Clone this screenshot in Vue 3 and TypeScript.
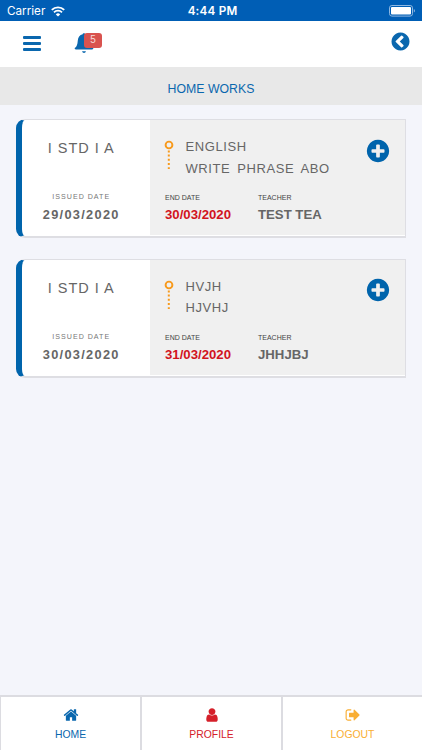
<script setup lang="ts">
interface HomeWork {
  group: string
  issued: string
  subject: string
  title: string
  due: string
  teacher: string
}

interface Tab {
  label: string
  tone: string
  path: string
}

const works: HomeWork[] = [
  { group: 'I STD I A', issued: '29/03/2020', subject: 'ENGLISH', title: 'WRITE PHRASE ABO', due: '30/03/2020', teacher: 'TEST TEA' },
  { group: 'I STD I A', issued: '30/03/2020', subject: 'HVJH', title: 'HJVHJ', due: '31/03/2020', teacher: 'JHHJBJ' },
]

const disc = 'M1664 896q0 209-103 385.5t-279.5 279.5-385.5 103-385.5-103-279.5-279.5-103-385.5 103-385.5 279.5-279.5 385.5-103 385.5 103 279.5 279.5 103 385.5z'
const plusPath = 'M1344 960v-128q0-26-19-45t-45-19h-256v-256q0-26-19-45t-45-19h-128q-26 0-45 19t-19 45v256h-256q-26 0-45 19t-19 45v128q0 26 19 45t45 19h256v256q0 26 19 45t45 19h128q26 0 45-19t19-45v-256h256q26 0 45-19t19-45z' + disc
const backPath = 'M1037 1395l102-102q19-19 19-45t-19-45l-307-307 307-307q19-19 19-45t-19-45l-102-102q-19-19-45-19t-45 19l-454 454q-19 19-19 45t19 45l454 454q19 19 45 19t45-19z' + disc

const tabs: Tab[] = [
  {
    label: 'HOME',
    tone: 'blue',
    path: 'M1472 992v480q0 26-19 45t-45 19h-384v-384h-256v384h-384q-26 0-45-19t-19-45v-480q0-1 .5-3t.5-3l575-474 575 474q1 2 1 6zm223-69l-62 74q-8 9-21 11h-3q-13 0-21-7l-692-577-692 577q-12 8-24 7-13-2-21-11l-62-74q-8-10-7-23.5t11-21.5l719-599q32-26 76-26t76 26l244 204v-195q0-14 9-23t23-9h192q14 0 23 9t9 23v408l219 182q10 8 11 21.5t-7 23.5z',
  },
  {
    label: 'PROFILE',
    tone: 'red',
    path: 'M1536 1399q0 109-62.5 187t-150.5 78h-854q-88 0-150.5-78t-62.5-187q0-85 8.5-160.5t31.5-152 58.5-131 94-89 134.5-34.5q131 128 313 128t313-128q76 0 134.5 34.5t94 89 58.5 131 31.5 152 8.5 160.5zm-256-887q0 159-112.5 271.5t-271.5 112.5-271.5-112.5-112.5-271.5 112.5-271.5 271.5-112.5 271.5 112.5 112.5 271.5z',
  },
  {
    label: 'LOGOUT',
    tone: 'amber',
    path: 'M704 1440q0 4 1 20t.5 26.5-3 23.5-10 19.5-20.5 6.5h-320q-119 0-203.5-84.5t-84.5-203.5v-704q0-119 84.5-203.5t203.5-84.5h320q13 0 22.5 9.5t9.5 22.5q0 4 1 20t.5 26.5-3 23.5-10 19.5-20.5 6.5h-320q-66 0-113 47t-47 113v704q0 66 47 113t113 47h312l11.5 1 11.5 3 8 5.5 7 9 2 13.5zm928-544q0 26-19 45l-544 544q-19 19-45 19t-45-19-19-45v-288h-448q-26 0-45-19t-19-45v-384q0-26 19-45t45-19h448v-288q0-26 19-45t45-19 45 19l544 544q19 19 19 45z',
  },
]
</script>

<template>
  <div class="screen">
    <div class="status">
      <div class="carrier">
        <span>Carrier</span>
        <svg class="wifi" viewBox="0 0 14 11" fill="none" stroke="#fff">
          <path d="M.8 3.9a8.8 8.8 0 0 1 12.4 0" stroke-width="1.9" />
          <path d="M3 6.3a5.6 5.6 0 0 1 8 0" stroke-width="1.8" />
          <path d="M7 10.6 4.8 8.4a3.1 3.1 0 0 1 4.4 0z" fill="#fff" stroke="none" />
        </svg>
      </div>
      <span class="clock">4:44 PM</span>
      <div class="power">
        <svg class="battery" viewBox="0 0 27 12">
          <rect x=".5" y=".5" width="23" height="10.6" rx="2.4" fill="none" stroke="#8fb8e2" />
          <rect x="2" y="2" width="20" height="7.6" rx="1" fill="#fff" />
          <path d="M24.8 4v3.6q1.2-.5 1.2-1.8t-1.2-1.8z" fill="#8fb8e2" />
        </svg>
      </div>
    </div>

    <header class="topbar">
      <div class="menu"><i></i><i></i><i></i></div>
      <div class="alerts">
        <svg class="bell" viewBox="0 0 20 22" fill="#0a67ae">
          <path d="M10 1.2q1.3 0 1.3 1.1c3.2.7 4.6 3 4.9 6.1.3 4.1 1 6.2 3.1 7.7q.3 1.4-1.2 1.4H1.9Q.3 17.5.7 16.1C2.8 14.6 3.5 12.500 3.8 8.4 4.1 5.3 5.5 3 8.7 2.3 8.7 1.500 9.3 1.2 10 1.2z" />
          <path d="M8 19.200h4q-.5 1.800-2 1.800t-2-1.800z" />
        </svg>
        <span class="badge">5</span>
      </div>
      <svg class="back" viewBox="0 0 1792 1792"><path :d="backPath" /></svg>
    </header>

    <h1 class="title">HOME WORKS</h1>

    <main class="list">
      <article v-for="work in works" :key="work.due" class="card">
        <div class="issued">
          <div class="group">{{ work.group }}</div>
          <div class="issued-label">ISSUED DATE</div>
          <div class="issued-date">{{ work.issued }}</div>
        </div>
        <div class="detail">
          <div class="upper">
            <svg class="marker" viewBox="0 0 10 30" fill="none" stroke="#f79a1d">
              <circle cx="5" cy="5" r="3.4" stroke-width="1.9" />
              <path d="M4.8 10.4V29" stroke-width="2" stroke-dasharray="2 2.2" />
            </svg>
            <div class="lines">
              <div>{{ work.subject }}</div>
              <div>{{ work.title }}</div>
            </div>
            <svg class="plus" viewBox="0 0 1792 1792"><path :d="plusPath" /></svg>
          </div>
          <div class="lower">
            <div class="due">
              <div class="caption">END DATE</div>
              <div class="value late">{{ work.due }}</div>
            </div>
            <div>
              <div class="caption">TEACHER</div>
              <div class="value">{{ work.teacher }}</div>
            </div>
          </div>
        </div>
      </article>
    </main>

    <nav class="tabs">
      <div v-for="tab in tabs" :key="tab.label" class="tab" :class="tab.tone">
        <svg class="tab-icon" viewBox="0 0 1792 1792"><path :d="tab.path" /></svg>
        <span>{{ tab.label }}</span>
      </div>
    </nav>
  </div>
</template>

<style>
body {
  margin: 0;
  background: #f4f5fb;
}
</style>

<style scoped>
.screen {
  width: 422px;
  height: 750px;
  display: flex;
  flex-direction: column;
  overflow: hidden;
  background: #f4f5fb;
  font-family: "Liberation Sans", Arial, sans-serif;
  color: #666;
}
svg {
  display: block;
  flex: none;
}
.status {
  height: 21px;
  flex: none;
  box-sizing: border-box;
  padding: 0 6px 0 7px;
  display: grid;
  grid-template-columns: 1fr auto 1fr;
  align-items: center;
  background: #005eb5;
  color: #fff;
  font-family: Inter, sans-serif;
  font-size: 11.7px;
  line-height: 22px;
}
.carrier {
  display: flex;
  align-items: center;
  gap: 6px;
}
.wifi {
  width: 14px;
  height: 11px;
}
.clock {
  margin-left: 2px;
  font-weight: 600;
  letter-spacing: 0.2px;
}
.power {
  display: flex;
  justify-content: flex-end;
}
.battery {
  width: 27px;
  height: 12px;
}
.topbar {
  height: 46px;
  flex: none;
  box-sizing: border-box;
  padding: 0 11px 0 23px;
  display: flex;
  align-items: flex-start;
  background: #fff;
}
.menu {
  width: 18px;
  padding-top: 15px;
  display: flex;
  flex-direction: column;
  gap: 3px;
}
.menu i {
  height: 3px;
  border-radius: 1px;
  background: #0a67ae;
}
.alerts {
  position: relative;
  margin: 11px 0 0 33px;
}
.bell {
  width: 20px;
  height: 22px;
}
.badge {
  position: absolute;
  left: 10px;
  top: 1px;
  width: 18px;
  height: 15px;
  border-radius: 3px;
  background: #d9534f;
  color: #f6dcdb;
  font-size: 10px;
  line-height: 14px;
  text-align: center;
}
.back {
  width: 21px;
  height: 21px;
  margin: 10px 0 0 auto;
  fill: #0a67ae;
}
.title {
  height: 38px;
  flex: none;
  margin: 0;
  background: #e8e8e8;
  color: #0a67ae;
  font-size: 12.3px;
  font-weight: 400;
  line-height: 44px;
  text-align: center;
}
.list {
  flex: 1;
  padding: 14px 16px 0;
  display: flex;
  flex-direction: column;
  gap: 20.5px;
}
.card {
  height: 119px;
  box-sizing: border-box;
  display: flex;
  border: 1px solid #dedee3;
  border-bottom-width: 2px;
  border-left: 6px solid #0064ac;
  border-radius: 9px 0 0 9px;
  background: #fff;
}
.issued {
  width: 128px;
  flex: none;
  box-sizing: border-box;
  padding: 19px 9.5px 0 0;
  text-align: center;
  white-space: nowrap;
}
.group {
  font-size: 14.5px;
  line-height: 18px;
  letter-spacing: 1px;
}
.issued-label {
  margin-top: 36px;
  font-size: 7.1px;
  line-height: 9px;
  letter-spacing: 1px;
  color: #777;
}
.issued-date {
  margin-top: 5px;
  font-size: 12.8px;
  line-height: 16px;
  font-weight: 700;
  letter-spacing: 1.3px;
}
.detail {
  flex: 1;
  margin-bottom: 1px;
  box-sizing: border-box;
  padding: 15px 15px 0 14px;
  background: #f0f0f0;
}
.upper {
  display: flex;
  align-items: flex-start;
}
.marker {
  width: 10px;
  height: 30px;
  margin-top: 5px;
}
.lines {
  flex: 1;
  height: 49px;
  margin-left: 11.5px;
  padding-top: 1px;
  font-size: 13px;
  line-height: 21.5px;
  letter-spacing: 0.6px;
  word-spacing: 2.7px;
  white-space: nowrap;
}
.plus {
  width: 26px;
  height: 26px;
  margin-top: 2.5px;
  margin-right: -1px;
  fill: #0064ac;
}
.lower {
  display: flex;
  margin: 8px 0 0 1px;
}
.due {
  width: 93px;
}
.caption {
  font-size: 7px;
  line-height: 9px;
  color: #444;
}
.value {
  margin-top: 5px;
  font-size: 13.2px;
  line-height: 16px;
  font-weight: 700;
}
.late {
  color: #d2141e;
}
.tabs {
  height: 55px;
  flex: none;
  box-sizing: border-box;
  display: flex;
  border-top: 2px solid #dcdce1;
}
.tab {
  flex: 1;
  display: flex;
  flex-direction: column;
  align-items: center;
  padding-top: 10px;
  border-left: 2px solid #dcdce1;
  background: #fff;
  fill: currentColor;
  font-size: 10.4px;
}
.tab:first-child {
  border-left-width: 1px;
}
.tab span {
  margin-top: 6px;
  line-height: 12px;
}
.tab-icon {
  width: 16px;
  height: 16px;
}
.blue {
  color: #0a67ae;
}
.red {
  color: #d5202a;
}
.amber {
  color: #f9ae33;
}
</style>
